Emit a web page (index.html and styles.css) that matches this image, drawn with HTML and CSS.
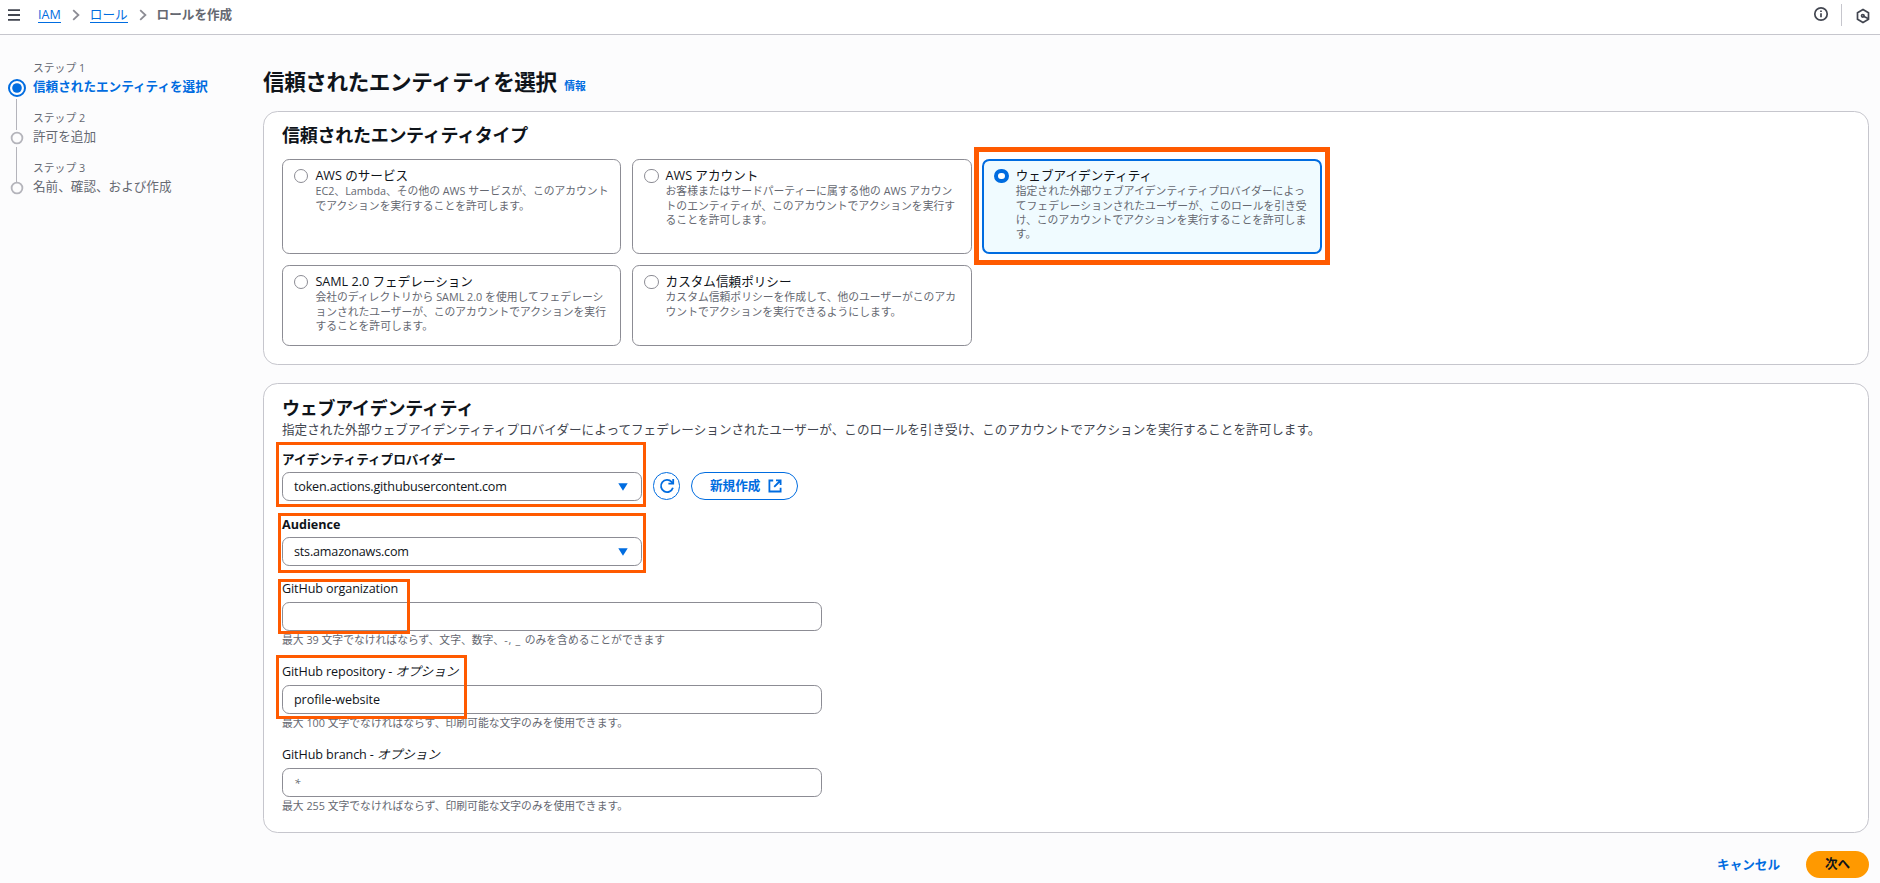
FILE: index.html
```html
<!DOCTYPE html>
<html lang="ja">
<head>
<meta charset="utf-8">
<title>ロールを作成</title>
<link rel="stylesheet" href="styles.css">
</head>
<body>
<header class="topbar">
  <svg class="menu-icon" width="14" height="14" viewBox="0 0 14 14"><path d="M1 2.2h12M1 7h12M1 11.8h12"/></svg>
  <nav class="crumbs">
    <a class="crumb" href="#">IAM</a>
    <svg class="chevron" width="8" height="12" viewBox="0 0 8 12"><path d="M1.2 1.2 6.4 6 1.2 10.8"/></svg>
    <a class="crumb" href="#">ロール</a>
    <svg class="chevron" width="8" height="12" viewBox="0 0 8 12"><path d="M1.2 1.2 6.4 6 1.2 10.8"/></svg>
    <span class="crumb-current">ロールを作成</span>
  </nav>
  <div class="tools">
    <svg class="tool-info" width="16" height="16" viewBox="0 0 16 16"><circle cx="8" cy="8" r="6.2"/><path d="M8 7.2v4M8 4.5v1.6"/></svg>
    <span class="tool-divider"></span>
    <svg class="tool-hex" width="16" height="16" viewBox="0 0 16 16"><path d="M8 1.6 13.5 4.8v6.4L8 14.4 2.5 11.2V4.8z"/><path d="M8 8l5 2.6"/><circle cx="7.8" cy="7.8" r="1.3"/></svg>
  </div>
</header>
<div class="layout">
  <aside class="steps">
    <div class="step active">
      <div class="rail"><svg width="20" height="20" viewBox="0 0 20 20"><circle class="ring" cx="10" cy="10" r="8"/><circle class="dot" cx="10" cy="10" r="4.8"/></svg><span class="line"></span></div>
      <div class="step-text"><div class="step-no">ステップ 1</div><div class="step-name">信頼されたエンティティを選択</div></div>
    </div>
    <div class="step">
      <div class="rail"><svg width="20" height="20" viewBox="0 0 20 20"><circle class="ring" cx="10" cy="10" r="5.4"/></svg><span class="line"></span></div>
      <div class="step-text"><div class="step-no">ステップ 2</div><div class="step-name">許可を追加</div></div>
    </div>
    <div class="step">
      <div class="rail"><svg width="20" height="20" viewBox="0 0 20 20"><circle class="ring" cx="10" cy="10" r="5.4"/></svg></div>
      <div class="step-text"><div class="step-no">ステップ 3</div><div class="step-name">名前、確認、および作成</div></div>
    </div>
  </aside>
  <main class="main">
    <div class="page-title"><h1>信頼されたエンティティを選択</h1><a class="info" href="#">情報</a></div>
    <section class="panel types">
      <h2>信頼されたエンティティタイプ</h2>
      <div class="tiles">
        <div class="tile"><span class="radio"></span><div><div class="tile-title">AWS のサービス</div><div class="tile-desc">EC2、Lambda、その他の AWS サービスが、このアカウント<br>でアクションを実行することを許可します。</div></div></div>
        <div class="tile"><span class="radio"></span><div><div class="tile-title">AWS アカウント</div><div class="tile-desc">お客様またはサードパーティーに属する他の AWS アカウン<br>トのエンティティが、このアカウントでアクションを実行す<br>ることを許可します。</div></div></div>
        <div class="tile selected"><span class="radio"></span><div><div class="tile-title">ウェブアイデンティティ</div><div class="tile-desc">指定された外部ウェブアイデンティティプロバイダーによっ<br>てフェデレーションされたユーザーが、このロールを引き受<br>け、このアカウントでアクションを実行することを許可しま<br>す。</div></div><span class="mark mark-tile"></span></div>
        <div class="tile"><span class="radio"></span><div><div class="tile-title">SAML 2.0 フェデレーション</div><div class="tile-desc">会社のディレクトリから SAML 2.0 を使用してフェデレーシ<br>ョンされたユーザーが、このアカウントでアクションを実行<br>することを許可します。</div></div></div>
        <div class="tile"><span class="radio"></span><div><div class="tile-title">カスタム信頼ポリシー</div><div class="tile-desc">カスタム信頼ポリシーを作成して、他のユーザーがこのアカ<br>ウントでアクションを実行できるようにします。</div></div></div>
      </div>
    </section>
    <section class="panel identity">
      <h2>ウェブアイデンティティ</h2>
      <p class="lead">指定された外部ウェブアイデンティティプロバイダーによってフェデレーションされたユーザーが、このロールを引き受け、このアカウントでアクションを実行することを許可します。</p>
      <div class="field provider">
        <div class="label bold">アイデンティティプロバイダー</div>
        <div class="row">
          <div class="box select"><span>token.actions.githubusercontent.com</span><svg width="10" height="8" viewBox="0 0 10 8"><path d="M0.3 0.3h9.4L5 7.8z"/></svg></div>
          <div class="refresh"><svg width="16" height="16" viewBox="0 0 16 16"><path d="M13.9 9.8A6.1 6.1 0 1 1 12.6 3.9L14 5.4"/><path d="M14.2 1V5.6H9.4"/></svg></div>
          <div class="create"><span>新規作成</span><svg width="14" height="14" viewBox="0 0 14 14"><path d="M5.2 1.5H1.4v11h11.2V8.8M8 1.4h4.6v4.6M12.5 1.5 6.2 7.8"/></svg></div>
        </div>
        <span class="mark mark-provider"></span>
      </div>
      <div class="field audience">
        <div class="label bold">Audience</div>
        <div class="box select"><span>sts.amazonaws.com</span><svg width="10" height="8" viewBox="0 0 10 8"><path d="M0.3 0.3h9.4L5 7.8z"/></svg></div>
        <span class="mark mark-audience"></span>
      </div>
      <div class="field org">
        <div class="label"><span class="latin">GitHub organization</span></div>
        <div class="box input"></div>
        <div class="hint">最大 39 文字でなければならず、文字、数字、<span class="symbols">-, _ </span>のみを含めることができます</div>
        <span class="mark mark-org"></span>
      </div>
      <div class="field repo">
        <div class="label"><span class="latin">GitHub repository - </span><i>オプション</i></div>
        <div class="box input">profile-website</div>
        <div class="hint">最大 100 文字でなければならず、印刷可能な文字のみを使用できます。</div>
        <span class="mark mark-repo"></span>
      </div>
      <div class="field branch">
        <div class="label"><span class="latin">GitHub branch - </span><i>オプション</i></div>
        <div class="box input placeholder">*</div>
        <div class="hint">最大 255 文字でなければならず、印刷可能な文字のみを使用できます。</div>
      </div>
    </section>
    <div class="actions"><a class="cancel" href="#">キャンセル</a><div class="next">次へ</div></div>
  </main>
</div>
</body>
</html>
```
FILE: styles.css
```css
* { box-sizing: border-box; }
body {
  margin: 0;
  height: 883px;
  overflow: hidden;
  background: #fcfcfd;
  color: #0f141a;
  font: 12.6px/18px "Open Sans", "Noto Sans CJK JP", sans-serif;
}
a { color: #006ce0; text-decoration: none; }
h1, h2, p { margin: 0; }
svg { display: block; fill: none; flex: none; }

.topbar {
  display: flex;
  height: 35px;
  padding: 0 9px 5px 7px;
  align-items: center;
  background: #fff;
  border-bottom: 1px solid #c6c6cd;
}
.menu-icon { stroke: #424650; stroke-width: 1.8; }
.crumbs { display: flex; align-items: center; margin-left: 17px; }
.crumb { border-bottom: 1px solid #006ce0; line-height: 17px; height: 17px; }
.chevron { margin: 0 10px 0 11px; stroke: #8c8c94; stroke-width: 1.8; }
.crumb-current { color: #656871; font-weight: 700; }
.tools { display: flex; align-items: center; margin-left: auto; }
.tools svg { stroke: #424650; stroke-width: 1.7; }
.tool-info { margin-top: -1px; }
.tool-divider { width: 1px; height: 22px; margin: 0 13px 0 12px; background: #c6c6cd; }
.tool-hex { margin-top: 3px; }

.layout { display: flex; }
.steps { width: 263px; padding: 24px 0 0 6px; color: #656871; }
.step { display: flex; height: 50px; }
.rail { display: flex; flex-direction: column; align-items: center; width: 21px; padding-top: 18.5px; }
.rail svg { margin-bottom: 1px; }
.ring { stroke: #b4b4bb; stroke-width: 1.8; }
.line { width: 1px; height: 31px; flex: none; background: #b4b4bb; }
.step:not(.active) .line { margin-top: -2px; height: 35px; }
.active .ring { stroke: #006ce0; stroke-width: 2; }
.active .dot { fill: #006ce0; }
.step-text { margin-left: 6px; }
.step-no { font-size: 10.8px; line-height: 18px; }
.step-name { line-height: 19.4px; white-space: nowrap; }
.active .step-name { color: #006ce0; font-weight: 700; }

.main { width: 1606px; }
.page-title { display: flex; align-items: baseline; gap: 7.5px; height: 76px; padding-top: 33px; }
h1 { font-size: 21.6px; line-height: 27px; letter-spacing: -0.02em; }
.info { font-size: 10.8px; font-weight: 700; }
.panel { border: 1px solid #c6c6cd; border-radius: 14.4px; background: #fff; padding: 0 18px; }
h2 { font-size: 18px; line-height: 22px; letter-spacing: -0.015em; }

.types { height: 254px; padding-top: 12px; }
.tiles {
  display: grid;
  grid-template-columns: repeat(3, 339.4px);
  grid-template-rows: 95px 81px;
  gap: 11px 10.8px;
  margin-top: 13px;
}
.tile { position: relative; display: flex; padding: 7px 0 0 11px; border: 1px solid #8c8c94; border-radius: 7.2px; white-space: nowrap; }
.radio { width: 14.4px; height: 14.4px; margin: 2px 7px 0 0; flex: none; border: 1px solid #8c8c94; border-radius: 50%; }
.tile-title { line-height: 17.2px; }
.tile-desc { font-size: 10.8px; line-height: 14.4px; color: #656871; }
.selected { padding: 6px 0 0 10px; border: 2px solid #006ce0; background: #f0fbff; }
.selected .radio { border: 4.5px solid #006ce0; background: #fff; }

.identity { height: 450px; margin-top: 18px; padding-top: 13px; }
.lead { margin-top: 2px; line-height: 18px; color: #424650; white-space: nowrap; }
.field { position: relative; }
.label { line-height: 18px; margin-bottom: 4px; }
.latin { letter-spacing: -0.11px; }
.bold { padding-top: 1px; margin-bottom: 3px; font-weight: 700; }
.row { display: flex; }
.box { display: flex; align-items: center; height: 29px; padding: 0 11px; border: 1px solid #8c8c94; border-radius: 7.2px; background: #fff; letter-spacing: -0.19px; }
.select { justify-content: space-between; width: 360px; }
.select svg { fill: #006ce0; margin-right: 2px; }
.input { width: 540px; }
.org .input, .repo .input { letter-spacing: -0.1px; }
.placeholder { color: #656871; font-style: italic; font-size: 11.5px; }
.hint { font-size: 10.8px; line-height: 14.4px; margin-top: 2px; color: #656871; }
.symbols { letter-spacing: 0.8px; }
.provider { margin-top: 11px; }
.audience { margin-top: 14px; }
.org { margin-top: 14px; }
.repo { margin-top: 15.6px; }
.branch { margin-top: 16px; }
.refresh { display: flex; align-items: center; justify-content: center; width: 27px; height: 28px; margin-left: 11px; border: 1.5px solid #006ce0; border-radius: 14px; }
.refresh svg, .create svg { stroke: #006ce0; stroke-width: 1.8; }
.create { display: flex; align-items: center; gap: 8px; width: 107px; height: 28px; margin-left: 11px; padding-left: 18px; border: 1.5px solid #006ce0; border-radius: 14px; color: #006ce0; font-weight: 700; }

/* Highlight frames drawn over the controls they call out */
.mark { position: absolute; border: 3px solid #ff5a00; }
.mark-tile { left: -10px; top: -14px; width: 356px; height: 118px; border-width: 5px; }
.mark-provider { left: -6px; top: -8px; width: 370px; height: 65px; }
.mark-audience { left: -4px; top: -2px; width: 368px; height: 60px; }
.mark-org { left: -4px; top: -1px; width: 132px; height: 55px; }
.mark-repo { left: -6px; top: -8px; width: 191px; height: 64px; }

.actions { display: flex; align-items: center; justify-content: flex-end; gap: 26px; margin-top: 18px; font-weight: 700; }
.next { width: 63px; height: 27px; border-radius: 14px; background: #ff9900; line-height: 26px; text-align: center; }
```
